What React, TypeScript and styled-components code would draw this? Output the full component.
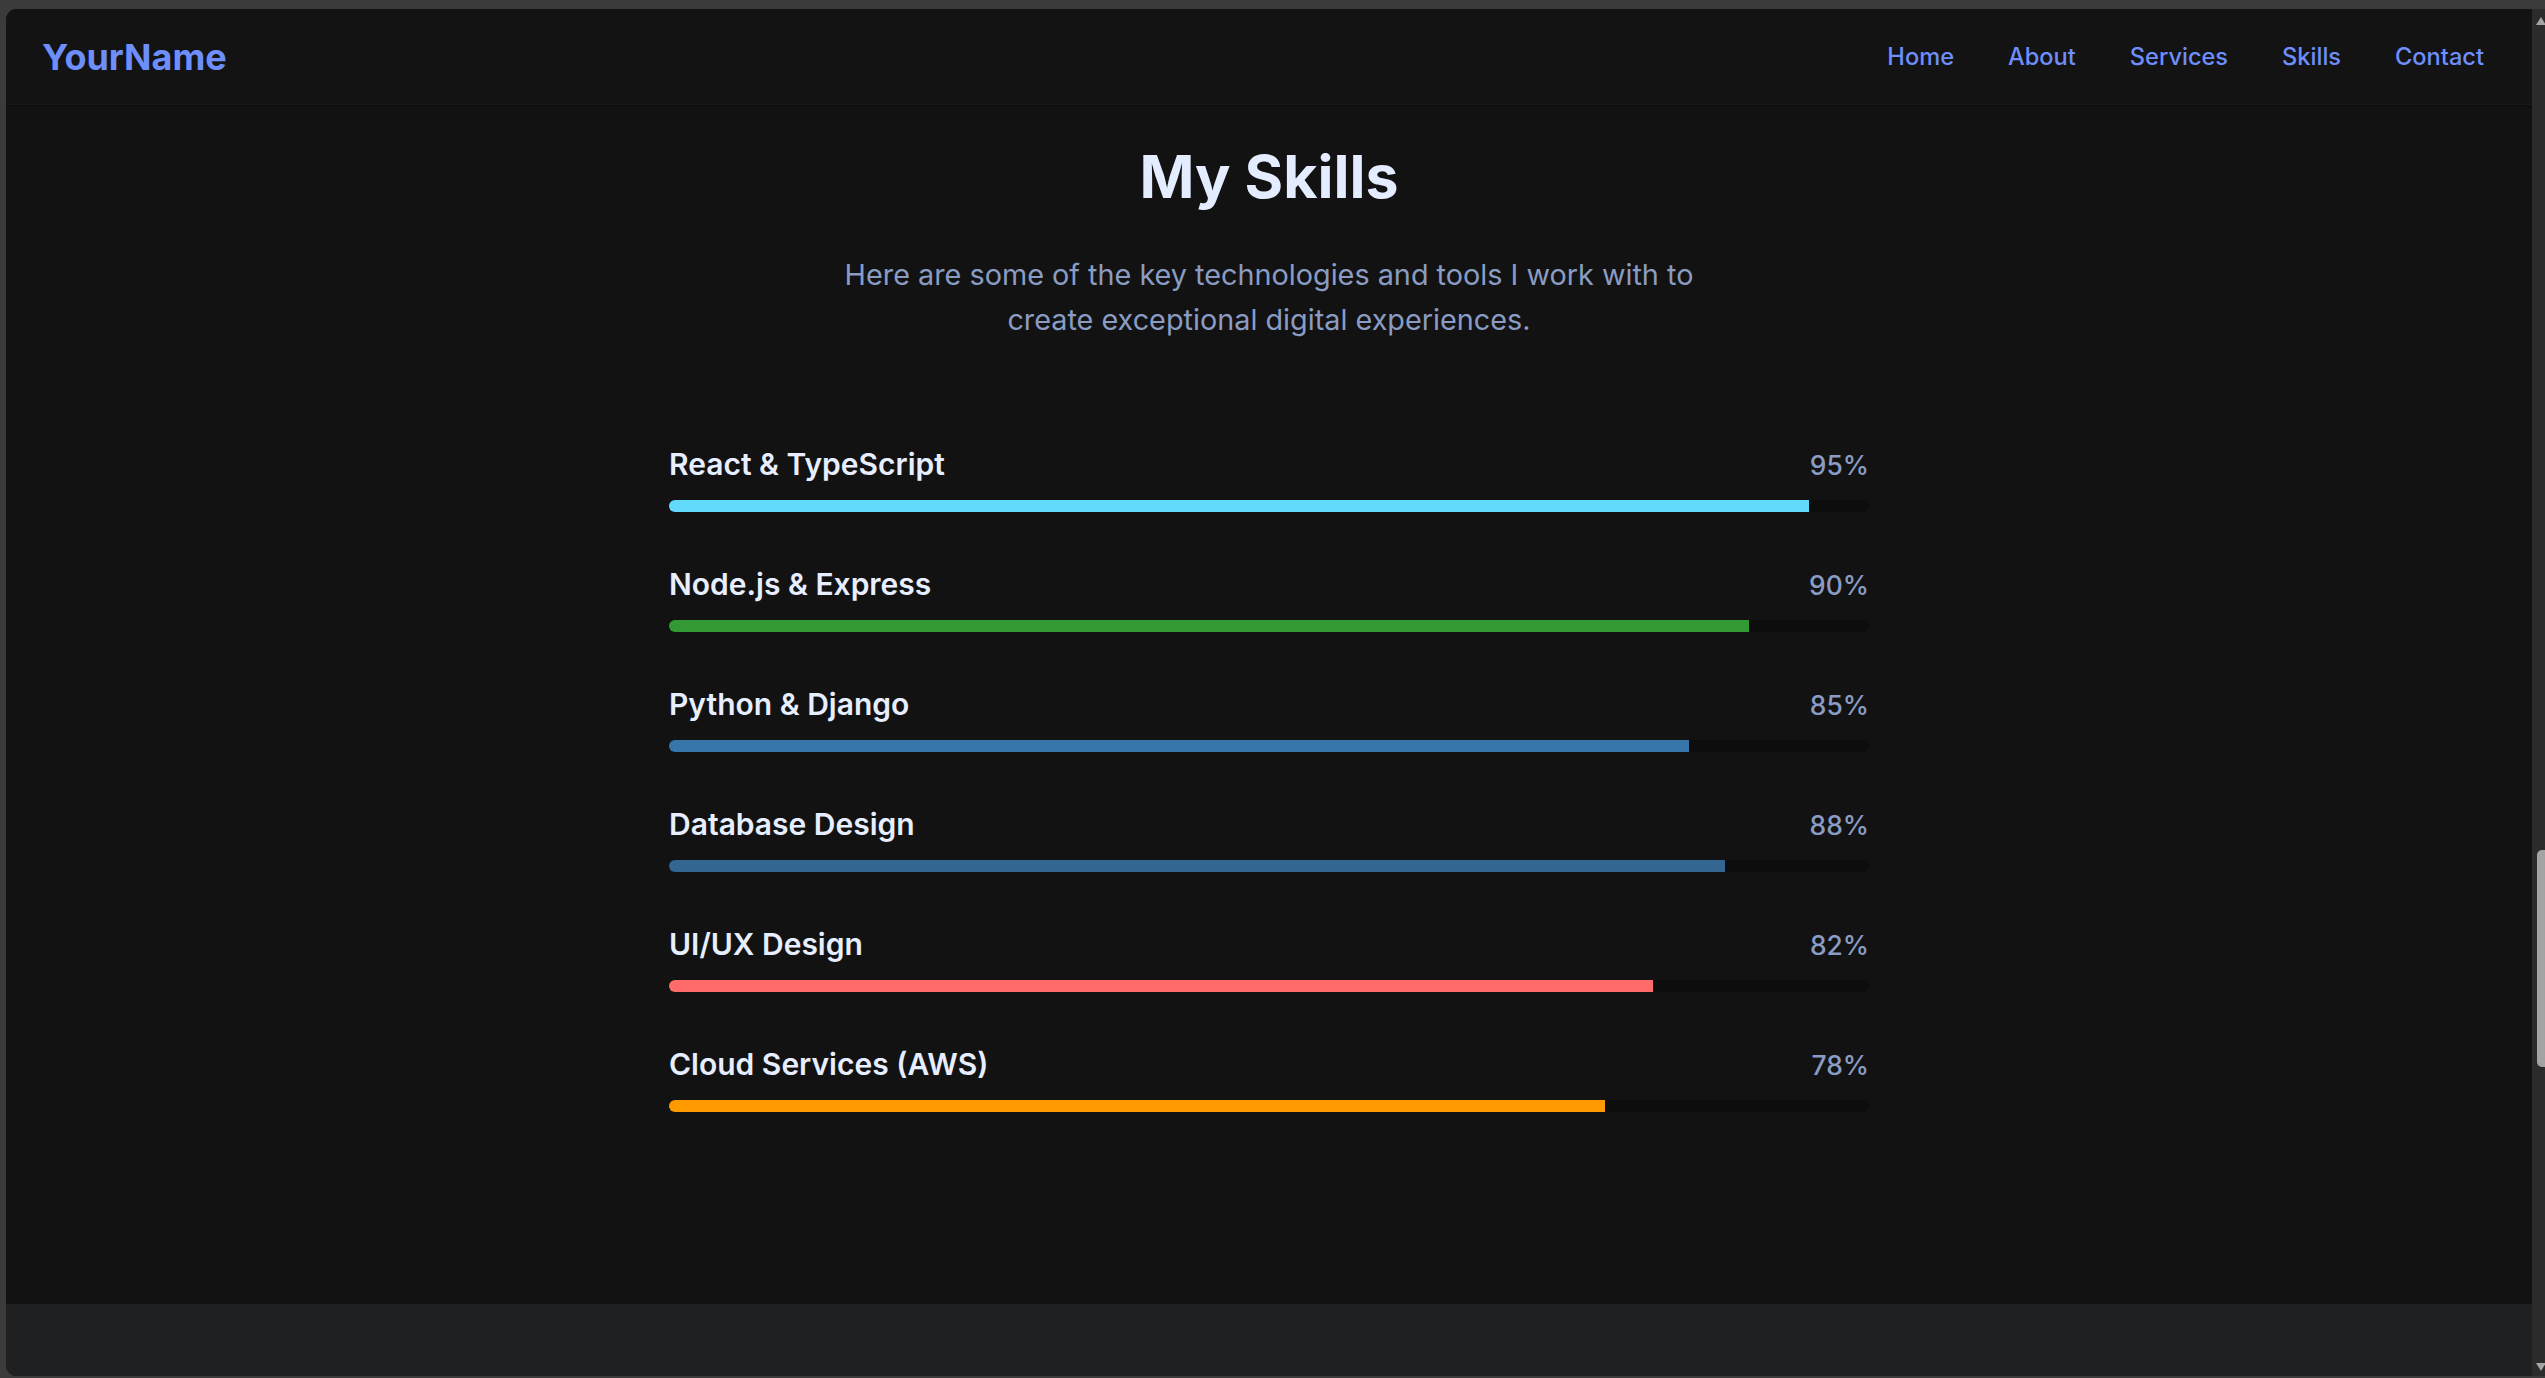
import React from "react";
import styled, { createGlobalStyle } from "styled-components";

const GlobalStyle = createGlobalStyle`
  html, body {
    margin: 0;
    padding: 0;
    background: #3b3b3b;
    overflow: hidden;
  }
  * { box-sizing: border-box; }
  body {
    font-family: Inter, "Noto Sans", "Liberation Sans", sans-serif;
  }
`;

const Window = styled.div`
  margin: 9px 0 0 6px;
  height: 1367px;
  display: flex;
  border-radius: 11px 0 0 11px;
  overflow: hidden;
`;

const Page = styled.div`
  flex: 1;
  min-width: 0;
  display: flex;
  flex-direction: column;
  background: #121212;
`;

const Header = styled.header`
  height: 96px;
  flex-shrink: 0;
  display: flex;
  align-items: center;
  justify-content: space-between;
  padding: 0 48px 0 36px;
  background: #131313;
  border-bottom: 1px solid #191919;
  box-shadow: 0 1px 3px rgba(0, 0, 0, 0.35);
`;

const Logo = styled.div`
  font-size: 36px;
  font-weight: 700;
  color: #6d8efb;
`;

const Nav = styled.nav`
  display: flex;
  gap: 54px;
`;

const NavLink = styled.a`
  font-size: 23.6px;
  font-weight: 500;
  color: #6d8efb;
  text-decoration: none;
`;

const Main = styled.main`
  flex: 1;
  padding-top: 36px;
`;

const Section = styled.section`
  width: 1200px;
  margin: 0 auto;
`;

const Title = styled.h2`
  margin: 0;
  font-size: 59px;
  line-height: 72px;
  font-weight: 700;
  text-align: center;
  color: #e4edff;
`;

const Subtitle = styled.p`
  margin: 39px auto 0;
  max-width: 900px;
  font-size: 28.8px;
  line-height: 45px;
  font-weight: 400;
  text-align: center;
  color: #8a9cc3;
`;

const SkillList = styled.div`
  margin-top: 104px;
  display: flex;
  flex-direction: column;
  gap: 54px;
`;

const SkillRow = styled.div`
  display: flex;
  flex-direction: column;
  gap: 18px;
`;

const SkillHead = styled.div`
  display: flex;
  justify-content: space-between;
  align-items: baseline;
`;

const SkillName = styled.span`
  font-size: 30px;
  font-weight: 600;
  color: #e6eeff;
`;

const SkillPct = styled.span`
  font-size: 26.4px;
  font-weight: 500;
  color: #8a9cc3;
`;

const Track = styled.div`
  height: 12px;
  background: #0d0d0d;
  border-radius: 6px;
  overflow: hidden;
`;

const Fill = styled.div<{ $color: string }>`
  height: 100%;
  background: ${(p) => p.$color};
`;

const Footer = styled.footer`
  height: 72px;
  flex-shrink: 0;
  background: #1f2022;
`;

const ScrollTrack = styled.div`
  width: 13px;
  flex-shrink: 0;
  background: #2b2b2b;
  display: flex;
  flex-direction: column;
`;

const Arrow = styled.svg<{ $top?: boolean }>`
  display: block;
  margin-left: 4px;
  margin-top: ${(p) => (p.$top ? "7px" : "auto")};
  margin-bottom: ${(p) => (p.$top ? "0" : "4px")};
  flex-shrink: 0;
`;

const Thumb = styled.div`
  margin-top: 824px;
  margin-left: 5px;
  width: 10px;
  height: 217px;
  background: #a3a3a3;
  border-radius: 5px 0 0 5px;
  flex-shrink: 0;
`;

const skills = [
  { name: "React & TypeScript", pct: 95, color: "#61dafb" },
  { name: "Node.js & Express", pct: 90, color: "#339933" },
  { name: "Python & Django", pct: 85, color: "#3776ab" },
  { name: "Database Design", pct: 88, color: "#336791" },
  { name: "UI/UX Design", pct: 82, color: "#ff6b6b" },
  { name: "Cloud Services (AWS)", pct: 78, color: "#ff9900" },
];

const links = ["Home", "About", "Services", "Skills", "Contact"];

export default function App() {
  return (
    <>
      <GlobalStyle />
      <Window>
        <Page>
          <Header>
            <Logo>YourName</Logo>
            <Nav>
              {links.map((l) => (
                <NavLink key={l} href={`#${l.toLowerCase()}`}>
                  {l}
                </NavLink>
              ))}
            </Nav>
          </Header>
          <Main>
            <Section>
              <Title>My Skills</Title>
              <Subtitle>
                Here are some of the key technologies and tools I work with to
                create exceptional digital experiences.
              </Subtitle>
              <SkillList>
                {skills.map((s) => (
                  <SkillRow key={s.name}>
                    <SkillHead>
                      <SkillName>{s.name}</SkillName>
                      <SkillPct>{s.pct}%</SkillPct>
                    </SkillHead>
                    <Track>
                      <Fill $color={s.color} style={{ width: `${s.pct}%` }} />
                    </Track>
                  </SkillRow>
                ))}
              </SkillList>
            </Section>
          </Main>
          <Footer />
        </Page>
        <ScrollTrack>
          <Arrow $top width="10" height="10" viewBox="0 0 10 10">
            <path d="M5 1 L10 9 L0 9 Z" fill="#a3a3a3" />
          </Arrow>
          <Thumb />
          <Arrow width="10" height="10" viewBox="0 0 10 10">
            <path d="M0 1 L10 1 L5 9 Z" fill="#a3a3a3" />
          </Arrow>
        </ScrollTrack>
      </Window>
    </>
  );
}
